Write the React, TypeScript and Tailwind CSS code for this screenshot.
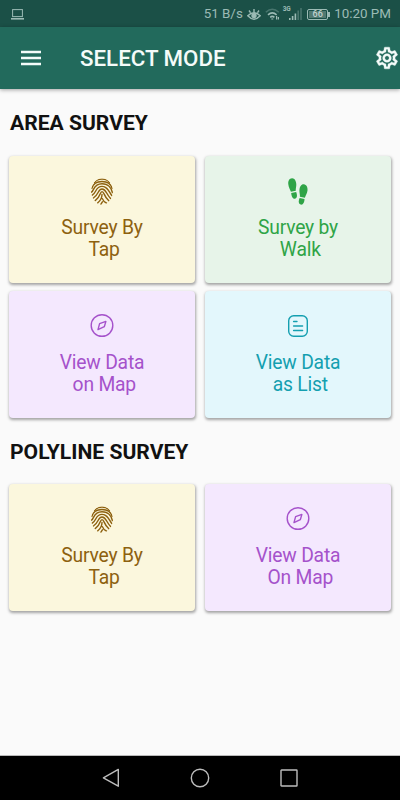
import cn from 'clsx';
import { useId } from 'react';
import type { ReactNode } from 'react';
import { MdOutlineSettings } from 'react-icons/md';

interface ModeCardProps {
  tone: 'yellow' | 'green' | 'purple' | 'cyan';
  icon: ReactNode;
  label: string;
}

function FingerprintIcon() {
  const clipId = useId();

  return (
    <svg
      className="h-[27px] w-[22px]"
      viewBox="0 0 22 27"
      fill="none"
      stroke="currentColor"
      strokeWidth="1.4"
      strokeLinecap="round"
    >
      <clipPath id={clipId}>
        <ellipse cx="11" cy="13.5" rx="11" ry="13.2" />
      </clipPath>
      <g clipPath={`url(#${clipId})`}>
        <path d="M3.4 4.6C7-0.1 15-0.1 18.6 4.6" />
        <path d="M0.9 10.4C3.4 1.2 18.6 1.2 21.1 10.4" />
        <path d="M0.5 14.2C3 12.6 2.6 5.8 11 5.8C17.6 5.8 20.6 10.8 21.4 14.5" />
        <path d="M1.2 17.2C5.6 14.8 4.4 8.4 11 8.4C16.6 8.4 17.8 13.6 20.8 17.6" />
        <path d="M2.4 20C7.8 16.8 6.8 11 11 11C15.2 11 15 16 19.6 20.4" />
        <path d="M4.2 22.6C10 18.6 8.8 13.6 11 13.6C13.4 13.6 12.6 18.4 17.8 22.8" />
        <path d="M6.6 25C10.4 21.6 11 19 11 16.4M11.4 20.6C12 22.6 13.4 24 15.6 25.2M9.8 26.4 11.4 23.8" />
      </g>
    </svg>
  );
}

function FootprintsIcon() {
  return (
    <svg
      className="h-[27px] w-[20px]"
      viewBox="0 0 20 27"
      fill="currentColor"
    >
      <path d="M4 0.3C6.6 0.1 8.1 3 8.3 6.2C8.4 8.8 7.5 10.8 7.8 12.7L2.9 13.7C2.3 11.7 0.6 9.6 0.3 6.2C0 2.9 1.3 0.5 4 0.3Z" />
      <path d="M3.2 15 8.1 14.1C9.4 17 9.3 20 7.1 20.7C4.6 21.2 3.5 18.4 3.2 15Z" />
      <path d="M15.8 6.3C18.5 6.6 19.9 9.4 19.5 12.6C19.1 15.9 17.4 17.8 16.9 19.8L11.9 18.8C12.2 16.9 11.3 14.8 11.4 12.1C11.7 8.9 13.2 6.1 15.8 6.3Z" />
      <path d="M11.6 20.1 16.5 21.1C16.3 24.5 15.2 27.1 12.6 26.6C10.4 26 10.3 23 11.6 20.1Z" />
    </svg>
  );
}

function CompassIcon() {
  return (
    <svg
      className="h-[24px] w-[24px]"
      viewBox="0 0 24 24"
      fill="none"
      stroke="currentColor"
      strokeWidth="1.4"
      strokeLinejoin="round"
    >
      <circle cx="12" cy="11.5" r="10.8" />
      <path d="M15.9 7.4 14.3 12.7 8 15.6 9.6 9.6Z" />
    </svg>
  );
}

function ListIcon() {
  return (
    <svg
      className="h-[22px] w-[20px]"
      viewBox="0 0 20 22"
      fill="none"
      stroke="currentColor"
      strokeWidth="1.4"
      strokeLinecap="round"
    >
      <rect x="0.7" y="0.7" width="18.6" height="20.6" rx="5" />
      <path d="M5.6 6.5H9M5.6 11H14.6M5.6 15.5H14.6" />
    </svg>
  );
}

function ModeCard({ tone, icon, label }: ModeCardProps) {
  return (
    <button
      type="button"
      className={cn(
        'flex h-[127px] flex-col items-center rounded-[4px] pt-[19px] shadow-[0.5px_1.5px_3px_rgba(0,0,0,0.35)]',
        {
          'bg-[#fbf7dd] text-[#8d610f]': tone === 'yellow',
          'bg-[#e7f4e9] text-[#2fa447]': tone === 'green',
          'bg-[#f4e8fe] text-[#a552cb]': tone === 'purple',
          'bg-[#e3f7fc] text-[#149fb0]': tone === 'cyan',
        }
      )}
    >
      <span className="mr-px flex h-[33px] items-center justify-center">
        {icon}
      </span>
      <span className="mt-[9px] text-center text-[19.3px] leading-[22px] tracking-[-0.2px] whitespace-pre">
        {label}
      </span>
    </button>
  );
}

function StatusBar() {
  return (
    <div className="flex h-[27px] items-center bg-[#1b5047] pt-px text-[#9cbbb5]">
      <svg
        className="ml-[11px] h-[11px] w-[13px]"
        viewBox="0 0 13 11"
        fill="none"
        stroke="currentColor"
      >
        <rect x="1.6" y="0.6" width="9.8" height="7" />
        <path d="M0 9.8H13" strokeWidth="1.6" />
      </svg>
      <span className="ml-auto text-[13.4px]">51 B/s</span>
      <svg
        className="ml-[4px] h-[13px] w-[14px]"
        viewBox="0 0 14 13"
        fill="none"
        stroke="currentColor"
        strokeWidth="1.4"
      >
        <path d="M0.8 7.8Q7 1.6 13.2 7.8Q7 14.6 0.8 7.8ZM2 2.5 3.5 4.6M7 1V4M12 2.5 10.5 4.6" />
        <circle cx="7" cy="7.6" r="2" fill="currentColor" />
      </svg>
      <svg
        className="ml-[4px] h-[12px] w-[15px]"
        viewBox="0 0 15 12"
        fill="none"
        stroke="currentColor"
        strokeWidth="1.5"
      >
        <path d="M0.8 4.2Q7.3-1.8 13.8 4.2" opacity="0.35" />
        <path d="M3 6.9Q7.3 2.8 11.6 6.9M5.2 9.4Q7.3 7.4 9.4 9.4" />
        <path d="M6.3 11H8.3M11.6 8V11.5M13.4 9V11.5" strokeWidth="1.2" />
      </svg>
      <span className="ml-[3px] mb-[9px] text-[6.5px] leading-none font-bold tracking-[-0.4px]">
        3G
      </span>
      <svg
        className="-ml-[1px] h-[12px] w-[13px]"
        viewBox="0 0 13 12"
        stroke="currentColor"
        strokeWidth="1.6"
      >
        <path d="M0.8 12V10M3.6 12V8M6.4 12V5.5" />
        <path d="M9.2 12V2.5M12 12V0" opacity="0.35" />
      </svg>
      <div className="ml-[5px] flex h-[11px] w-[21px] items-center justify-center rounded-[2px] border border-current p-px">
        <span className="flex h-full w-full items-center justify-center bg-[#527a72] text-[9px] leading-none font-medium text-[#c0d3cf]">
          66
        </span>
      </div>
      <span className="h-[5px] w-[2px] bg-current" />
      <span className="mr-[9px] ml-[4px] text-[13.4px]">10:20 PM</span>
    </div>
  );
}

export default function App() {
  return (
    <div className="flex h-[800px] w-[400px] flex-col overflow-hidden bg-[#fafafa] font-['Roboto',sans-serif]">
      <StatusBar />

      <header className="flex h-[62px] items-center bg-[#226a5c] text-[#f4fbf9] shadow-[0_1px_4px_rgba(0,0,0,0.35)]">
        <button type="button" className="ml-[21px]">
          <svg
            className="h-[16px] w-[20px]"
            viewBox="0 0 20 16"
            stroke="currentColor"
            strokeWidth="2.3"
          >
            <path d="M0 2H20M0 8H20M0 14H20" />
          </svg>
        </button>
        <h1 className="mt-px ml-[39px] text-[22.3px] font-medium">
          SELECT MODE
        </h1>
        <MdOutlineSettings className="ml-auto h-[26px] w-[26px] [&>path:last-child]:stroke-current [&>path:last-child]:stroke-[0.35px]" />
      </header>

      <main className="flex-1 px-[9px]">
        <h2 className="mt-[20px] ml-px text-[21.1px] leading-[28px] font-bold text-[#111]">
          AREA SURVEY
        </h2>
        <div className="mt-[18.6px] grid grid-cols-2 gap-x-[10px] gap-y-[8.4px]">
          <ModeCard
            tone="yellow"
            icon={<FingerprintIcon />}
            label={'Survey By\n Tap'}
          />
          <ModeCard
            tone="green"
            icon={<FootprintsIcon />}
            label={'Survey by\n Walk'}
          />
          <ModeCard
            tone="purple"
            icon={<CompassIcon />}
            label={'View Data\n on Map'}
          />
          <ModeCard
            tone="cyan"
            icon={<ListIcon />}
            label={'View Data\n as List'}
          />
        </div>

        <h2 className="mt-[20px] ml-px text-[21.1px] leading-[28px] font-bold text-[#111]">
          POLYLINE SURVEY
        </h2>
        <div className="mt-[18px] grid grid-cols-2 gap-x-[10px]">
          <ModeCard
            tone="yellow"
            icon={<FingerprintIcon />}
            label={'Survey By\n Tap'}
          />
          <ModeCard
            tone="purple"
            icon={<CompassIcon />}
            label={'View Data\n On Map'}
          />
        </div>
      </main>

      <nav className="flex h-[45px] items-center justify-between border-t border-[#b9b9b9] bg-black pr-[102px] pl-[102px] text-[#bdbdbd]">
        <svg
          className="h-[20px] w-[18px]"
          viewBox="0 0 18 20"
          fill="none"
          stroke="currentColor"
          strokeWidth="1.4"
          strokeLinejoin="round"
        >
          <path d="M16.3 1.4V18.2L1.4 9.8Z" />
        </svg>
        <svg
          className="h-[20px] w-[20px]"
          viewBox="0 0 20 20"
          fill="none"
          stroke="currentColor"
          strokeWidth="1.4"
        >
          <circle cx="10" cy="10" r="8.7" />
        </svg>
        <svg
          className="h-[18px] w-[18px]"
          viewBox="0 0 18 18"
          fill="none"
          stroke="currentColor"
          strokeWidth="1.4"
        >
          <rect x="1" y="1" width="16" height="16" rx="0.5" />
        </svg>
      </nav>
    </div>
  );
}
